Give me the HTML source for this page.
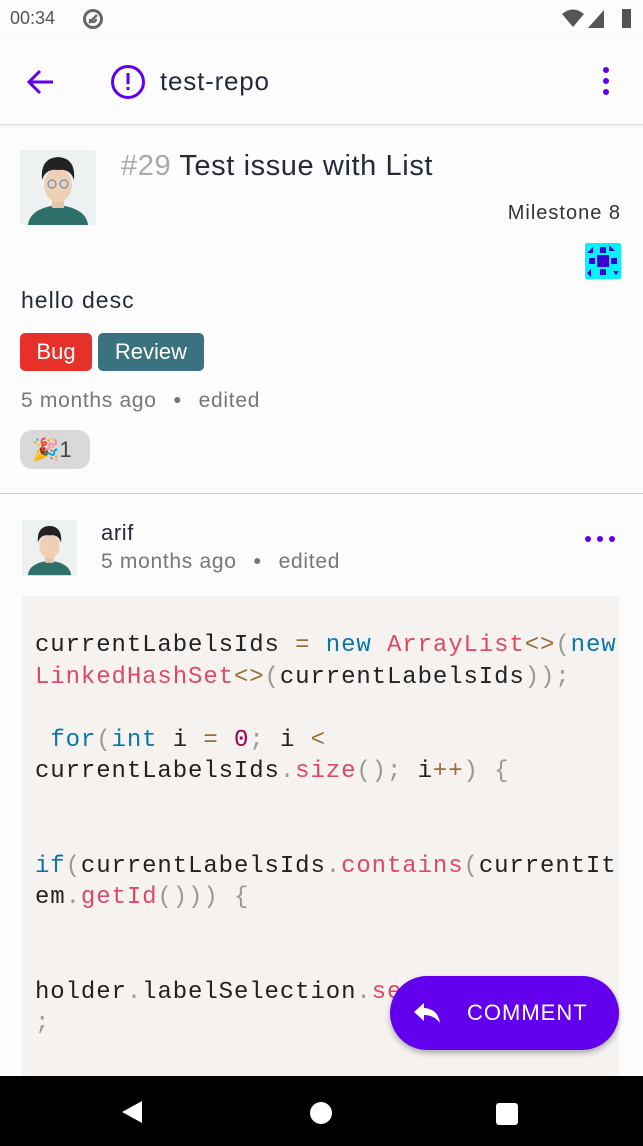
<!DOCTYPE html>
<html><head><meta charset="utf-8"><style>
*{margin:0;padding:0;box-sizing:border-box}
body{width:643px;height:1146px;overflow:hidden;background:#fcfcfd;font-family:"Liberation Sans",sans-serif;position:relative;color:#222}
.abs{position:absolute}
.code{position:absolute;left:22px;top:596px;width:597px;height:480px;background:#f5f2f0;overflow:hidden}
.code div{position:absolute;left:13px;font-family:"Liberation Mono",monospace;font-size:24px;letter-spacing:0.9px;white-space:nowrap;color:#222;line-height:32px}
.k{color:#0a77a8}.f{color:#dd4a68}.o{color:#9a6e3a}.p{color:#999}.n{color:#905}
.meta{font-size:21px;color:#777;letter-spacing:0.7px}
.meta span{display:inline-block;width:42px;text-align:center;font-size:14px;position:relative;top:-3px}
</style></head><body>
<div class="abs" style="left:10px;top:8px;font-size:18px;color:#555">00:34</div>
<svg class="abs" style="left:81px;top:7px" width="24" height="24" viewBox="0 0 24 24"><circle cx="12" cy="12" r="8.5" fill="none" stroke="#666" stroke-width="3"/><path d="M8 16L16 8M9 12a3 3 0 0 0 6 0" stroke="#666" stroke-width="2.5" fill="none"/></svg>
<svg class="abs" style="left:560px;top:6px" width="80" height="24" viewBox="0 0 80 24"><path d="M2 8 Q13 -1 24 8 L13 21Z" fill="#555"/><path d="M44 4 L44 22 L28 22Z" fill="#555"/><rect x="62" y="3" width="9" height="19" fill="#555"/></svg>
<div class="abs" style="left:0;top:37px;width:643px;height:88px;background:#fcfcfd;border-bottom:1px solid #ddd;box-shadow:0 1px 3px rgba(0,0,0,.08)"></div>
<svg class="abs" style="left:26px;top:68px" width="30" height="28" viewBox="0 0 30 28"><path d="M27 14H4M14 3L3 14L14 25" stroke="#6200ee" stroke-width="3" fill="none"/></svg>
<svg class="abs" style="left:110px;top:64px" width="36" height="36" viewBox="0 0 36 36"><circle cx="18" cy="18" r="15.5" fill="none" stroke="#6200ee" stroke-width="3"/><rect x="16.5" y="9" width="3" height="11" fill="#6200ee"/><rect x="16.5" y="23" width="3" height="3" fill="#6200ee"/></svg>
<div class="abs" style="left:160px;top:66px;font-size:26px;color:#252b38;letter-spacing:0.8px">test-repo</div>
<div class="abs" style="left:603px;top:67px;width:6px;height:6px;border-radius:3px;background:#6200ee;box-shadow:0 11px 0 #6200ee,0 22px 0 #6200ee"></div>

<div class="abs" style="left:20px;top:150px;width:76px;height:75px;background:#eef1f1;border-radius:3px;overflow:hidden">
<svg width="76" height="75" viewBox="0 0 76 75"><path d="M8 75 Q10 58 38 55 Q66 58 68 75Z" fill="#2e6f6a"/><rect x="32" y="46" width="12" height="12" fill="#e9c5a8"/><ellipse cx="38" cy="35" rx="14" ry="17" fill="#f0d0b5"/><path d="M22 30 Q20 8 38 7 Q56 8 54 30 Q50 18 38 20 Q26 18 22 30Z" fill="#222"/><circle cx="32" cy="34" r="4" fill="none" stroke="#6b8fb0" stroke-width="1.2"/><circle cx="44" cy="34" r="4" fill="none" stroke="#6b8fb0" stroke-width="1.2"/></svg></div>
<div class="abs" style="left:121px;top:150px;font-size:29px;color:#252b38;letter-spacing:0.6px"><span style="color:#aaa">#29</span> Test issue with List</div>
<div class="abs" style="right:22px;top:202px;font-size:20px;color:#333;letter-spacing:1px">Milestone 8</div>
<svg class="abs" style="left:585px;top:243px" width="36" height="36" viewBox="0 0 36 36"><rect width="36" height="36" rx="2" fill="#00f4ff"/><g fill="#3a00d0"><rect x="12" y="12" width="12" height="12"/><rect x="15" y="4" width="6" height="6"/><rect x="4" y="15" width="6" height="6"/><rect x="26" y="15" width="6" height="6"/><rect x="15" y="26" width="6" height="6"/><path d="M24 2 L30 8 L24 8Z M2 10 L8 4 L8 10Z M28 28 L34 28 L31 32Z M6 26 L6 34 L2 30Z"/></g></svg>
<div class="abs" style="left:21px;top:287px;font-size:23px;color:#252b38;letter-spacing:1px">hello desc</div>
<div class="abs" style="left:20px;top:333px;width:72px;height:38px;border-radius:5px;background:#e8302a;color:#fff;font-size:22px;text-align:center;line-height:38px">Bug</div>
<div class="abs" style="left:98px;top:333px;width:106px;height:38px;border-radius:5px;background:#3b7280;color:#fff;font-size:22px;text-align:center;line-height:38px">Review</div>
<div class="abs meta" style="left:21px;top:389px">5 months ago<span>●</span>edited</div>
<div class="abs" style="left:20px;top:430px;width:70px;height:39px;border-radius:12px;background:#d9d9d9;font-size:22px;line-height:39px;padding-left:12px;color:#444">🎉1</div>
<div class="abs" style="left:0;top:493px;width:643px;height:1px;background:#ccc"></div>

<div class="abs" style="left:22px;top:520px;width:55px;height:56px;background:#eef1f1;overflow:hidden">
<svg width="55" height="56" viewBox="0 0 76 75"><path d="M8 75 Q10 58 38 55 Q66 58 68 75Z" fill="#2e6f6a"/><rect x="32" y="46" width="12" height="12" fill="#e9c5a8"/><ellipse cx="38" cy="35" rx="14" ry="17" fill="#f0d0b5"/><path d="M22 30 Q20 8 38 7 Q56 8 54 30 Q50 18 38 20 Q26 18 22 30Z" fill="#222"/></svg></div>
<div class="abs" style="left:101px;top:520px;font-size:22px;color:#252b38;letter-spacing:0.6px">arif</div>
<div class="abs meta" style="left:101px;top:550px">5 months ago<span>●</span>edited</div>
<div class="abs" style="left:585px;top:536px;width:6px;height:6px;border-radius:3px;background:#6200ee;box-shadow:12px 0 0 #6200ee,24px 0 0 #6200ee"></div>

<div class="code">
<div style="top:34px">currentLabelsIds <span class="o">=</span> <span class="k">new</span> <span class="f">ArrayList</span><span class="o">&lt;&gt;</span><span class="p">(</span><span class="k">new</span></div>
<div style="top:66px"><span class="f">LinkedHashSet</span><span class="o">&lt;&gt;</span><span class="p">(</span>currentLabelsIds<span class="p">));</span></div>
<div style="top:129px">&nbsp;<span class="k">for</span><span class="p">(</span><span class="k">int</span> i <span class="o">=</span> <span class="n">0</span><span class="p">;</span> i <span class="o">&lt;</span></div>
<div style="top:160px">currentLabelsIds<span class="p">.</span><span class="f">size</span><span class="p">();</span> i<span class="o">++</span><span class="p">)</span> <span class="p">{</span></div>
<div style="top:255px"><span class="k">if</span><span class="p">(</span>currentLabelsIds<span class="p">.</span><span class="f">contains</span><span class="p">(</span>currentIt</div>
<div style="top:286px">em<span class="p">.</span><span class="f">getId</span><span class="p">()))</span> <span class="p">{</span></div>
<div style="top:381px">holder<span class="p">.</span>labelSelection<span class="p">.</span><span class="f">se</span></div>
<div style="top:412px"><span class="p">;</span></div>
</div>

<div class="abs" style="left:390px;top:976px;width:229px;height:74px;border-radius:37px;background:#6200ee;box-shadow:0 3px 6px rgba(0,0,0,.3)">
<svg class="abs" style="left:22px;top:25px" width="30" height="24" viewBox="0 0 30 24"><path d="M12 2 L2 11 L12 20 L12 14 Q22 14 28 22 Q26 8 12 7Z" fill="#fff"/></svg>
<div class="abs" style="left:77px;top:24px;font-size:22px;color:#fff;letter-spacing:1px">COMMENT</div></div>

<div class="abs" style="left:0;top:1076px;width:643px;height:70px;background:#000">
<svg class="abs" style="left:120px;top:24px" width="24" height="24" viewBox="0 0 24 24"><path d="M22 1 L22 23 L2 12Z" fill="#fff"/></svg>
<div class="abs" style="left:310px;top:26px;width:22px;height:22px;border-radius:11px;background:#fff"></div>
<div class="abs" style="left:496px;top:27px;width:22px;height:22px;border-radius:3px;background:#fff"></div>
</div>
</body></html>
